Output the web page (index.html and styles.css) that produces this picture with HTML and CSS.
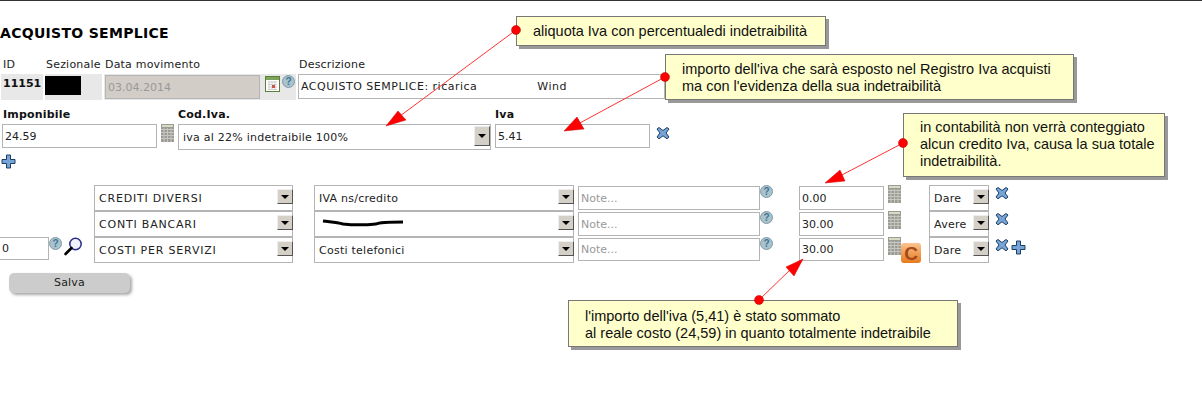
FILE: index.html
```html
<!DOCTYPE html>
<html lang="it">
<head>
    <meta charset="UTF-8">
    <meta name="viewport" content="width=device-width, initial-scale=1.0">
    <title>Acquisto semplice</title>
    <link rel="stylesheet" href="styles.css">
</head>
<body>
    <!-- Icone riutilizzate -->
    <svg class="sprite" aria-hidden="true">
        <symbol id="i-help" viewBox="0 0 13 13">
            <circle cx="6.5" cy="6.5" r="6" fill="#a9c3cd" stroke="#7f9aa6"/>
            <text x="6.5" y="10.2" text-anchor="middle" font-family="Liberation Sans, sans-serif" font-size="10" font-weight="bold" fill="#3f7396">?</text>
        </symbol>
        <symbol id="i-x" viewBox="0 0 14 14">
            <path d="M3 1.5 L7 4.5 L11 1.5 L13 3 L10 7 L13 11 L11 12.8 L7 9.8 L3 12.8 L1 11 L4 7 L1 3 Z" fill="#76a4d6" stroke="#1f3d63" stroke-linejoin="round"/>
        </symbol>
        <symbol id="i-plus" viewBox="0 0 15 15">
            <path d="M5.5 1 H9.5 V5.5 H14 V9.5 H9.5 V14 H5.5 V9.5 H1 V5.5 H5.5 Z" fill="#76a4d6" stroke="#1f3d63" stroke-linejoin="round"/>
        </symbol>
        <symbol id="i-calc" viewBox="0 0 13 18">
            <rect width="13" height="18" fill="#9c9c95"/>
            <rect x="1" y="1" width="11" height="2" fill="#d3dcc4"/>
            <path d="M0 5.5 H13 M0 8.5 H13 M0 11.5 H13 M0 14.5 H13 M3 4 V18 M6.5 4 V18 M10 4 V18" stroke="#c6c6c0" stroke-width="1"/>
        </symbol>
    </svg>

    <h1 class="title">ACQUISTO SEMPLICE</h1>

    <div class="meta">
        <span class="meta-label">ID</span>
        <span class="meta-label meta-label-tight">Sezionale</span>
        <span class="meta-label meta-label-tight">Data movimento</span>
        <span class="meta-label meta-label-tight">Descrizione</span>

        <div class="meta-cell meta-id">11151</div>
        <div class="meta-cell"><span class="redacted"></span></div>
        <div class="meta-cell meta-date">
            <input class="field field-disabled" value="03.04.2014" disabled>
            <svg class="icon-calendar" viewBox="0 0 15 16">
                <rect x="0.5" y="0.5" width="14" height="15" fill="#fff" stroke="#5d7d3c"/>
                <rect x="1" y="1" width="13" height="3" fill="#7ea35a"/>
                <path d="M3 6 H12 M3 8.5 H12 M3 11 H12 M3 13.5 H12 M4 5 V14 M7 5 V14 M10 5 V14" stroke="#cfcfcf"/>
                <rect x="7" y="9" width="3" height="3" fill="#c9534a"/>
            </svg>
            <svg class="icon-help"><use href="#i-help"/></svg>
        </div>
        <input class="field meta-desc" value="ACQUISTO SEMPLICE: ricarica               Wind">
    </div>

    <div class="tax">
        <div class="tax-col tax-col-base">
            <label class="tax-label">Imponibile</label>
            <div class="tax-control">
                <input class="field field-amount" value="24.59">
                <svg class="icon-calc"><use href="#i-calc"/></svg>
            </div>
        </div>
        <div class="tax-col tax-col-code">
            <label class="tax-label">Cod.Iva.</label>
            <div class="select select-tall">
                <select><option>iva al 22% indetraibile 100%</option></select>
                <span class="arrow"></span>
            </div>
        </div>
        <div class="tax-col">
            <label class="tax-label">Iva</label>
            <div class="tax-control">
                <input class="field field-amount" value="5.41">
                <svg class="icon-x icon-x-tax"><use href="#i-x"/></svg>
            </div>
        </div>
    </div>
    <svg class="icon-plus icon-plus-tax"><use href="#i-plus"/></svg>

    <div class="ledger">
        <!-- Riga 1 -->
        <div></div>
        <div class="select select-caps"><select><option>CREDITI DIVERSI</option></select><span class="arrow"></span></div>
        <div class="select select-sub"><select><option>IVA ns/credito</option></select><span class="arrow"></span></div>
        <div class="cell">
            <input class="field field-note" placeholder="Note...">
            <svg class="icon-help"><use href="#i-help"/></svg>
        </div>
        <div class="cell">
            <input class="field field-value" value="0.00">
            <svg class="icon-calc icon-calc-row"><use href="#i-calc"/></svg>
        </div>
        <div class="cell-side">
            <div class="select select-side"><select><option>Dare</option></select><span class="arrow"></span></div>
            <svg class="icon-x"><use href="#i-x"/></svg>
        </div>

        <!-- Riga 2 -->
        <div></div>
        <div class="select select-caps"><select><option>CONTI BANCARI</option></select><span class="arrow"></span></div>
        <div class="select select-sub">
            <select><option></option></select><span class="arrow"></span>
            <svg class="scribble" viewBox="0 0 84 8"><path d="M1 2 C8 3 14 3 21 5 C30 6 44 6 54 5 C58 3 70 3 81 3" fill="none" stroke="#000" stroke-width="3"/></svg>
        </div>
        <div class="cell">
            <input class="field field-note" placeholder="Note...">
            <svg class="icon-help"><use href="#i-help"/></svg>
        </div>
        <div class="cell">
            <input class="field field-value" value="30.00">
            <svg class="icon-calc icon-calc-row"><use href="#i-calc"/></svg>
        </div>
        <div class="cell-side">
            <div class="select select-side"><select><option>Avere</option></select><span class="arrow"></span></div>
            <svg class="icon-x"><use href="#i-x"/></svg>
        </div>

        <!-- Riga 3 -->
        <div class="cell-search">
            <input class="field field-zero" value="0">
            <svg class="icon-help icon-help-search"><use href="#i-help"/></svg>
            <svg class="icon-search" viewBox="0 0 20 19">
                <circle cx="12.5" cy="7" r="5.7" fill="#f2f2fc" stroke="#2a2a8a" stroke-width="1.5"/>
                <path d="M8.5 11 L2.5 17" stroke="#000" stroke-width="2.6" stroke-linecap="round"/>
            </svg>
        </div>
        <div class="select select-caps"><select><option>COSTI PER SERVIZI</option></select><span class="arrow"></span></div>
        <div class="select select-sub"><select><option>Costi telefonici</option></select><span class="arrow"></span></div>
        <div class="cell">
            <input class="field field-note field-short" placeholder="Note...">
            <svg class="icon-help"><use href="#i-help"/></svg>
        </div>
        <div class="cell">
            <input class="field field-value field-short" value="30.00">
            <svg class="icon-calc icon-calc-row"><use href="#i-calc"/></svg>
            <svg class="icon-c" viewBox="0 0 20 20">
                <defs>
                    <linearGradient id="c-bg" x1="0" y1="0" x2="0" y2="1">
                        <stop offset="0" stop-color="#fbc48e"/>
                        <stop offset="1" stop-color="#e67a1e"/>
                    </linearGradient>
                </defs>
                <rect width="20" height="20" rx="3" fill="url(#c-bg)"/>
                <text x="10" y="16.5" text-anchor="middle" font-family="Liberation Sans, sans-serif" font-size="19" font-weight="bold" fill="#a3491a">C</text>
            </svg>
        </div>
        <div class="cell-side">
            <div class="select select-side"><select><option>Dare</option></select><span class="arrow"></span></div>
            <svg class="icon-x"><use href="#i-x"/></svg>
            <svg class="icon-plus icon-plus-row"><use href="#i-plus"/></svg>
        </div>
    </div>

    <button class="save">Salva</button>

    <!-- Note sovrapposte allo screenshot -->
    <svg class="arrows" viewBox="0 0 1202 400">
        <g class="arrow-line">
            <path d="M516 30 L400 116"/>
            <path d="M665 77 L578 124"/>
            <path d="M903 143 L838 177"/>
            <path d="M759 300 L792 268"/>
        </g>
        <g class="arrow-head">
            <path d="M386 126 L398 111 L406 120 Z"/>
            <path d="M564 131 L577 117 L584 129 Z"/>
            <path d="M825 183 L840 170 L845 181 Z"/>
            <path d="M803 259 L786 267 L794 276 Z"/>
        </g>
        <g class="arrow-dot">
            <circle cx="516" cy="30" r="4.5"/>
            <circle cx="665" cy="77" r="4.5"/>
            <circle cx="903" cy="143" r="4.5"/>
            <circle cx="759" cy="300" r="4.5"/>
        </g>
    </svg>

    <div class="note note-rate">aliquota Iva con percentualedi indetraibilità</div>
    <div class="note note-register">importo dell'iva che sarà esposto nel Registro Iva acquisti<br>ma con l'evidenza della sua indetraibilità</div>
    <div class="note note-credit">in contabilità non verrà conteggiato<br>alcun credito Iva, causa la sua totale<br>indetraibilità.</div>
    <div class="note note-cost">l'importo dell'iva (5,41) è stato sommato<br>al reale costo (24,59) in quanto totalmente indetraibile</div>
</body>
</html>
```

FILE: styles.css
```css
body {
    margin: 0;
    padding: 0;
    height: 399px;
    overflow: hidden;
    position: relative;
    border-top: 1px solid #333;
    background-color: #fff;
    color: #222;
    font-family: "DejaVu Sans", Verdana, sans-serif;
    font-size: 11px;
}
.sprite {
    display: none;
}
svg {
    display: block;
    flex: none;
}
.title {
    margin: 24px 0 0;
    font-size: 14px;
    line-height: 17px;
    font-weight: bold;
    letter-spacing: 0.3px;
    color: #000;
}

/* Intestazione */
.meta {
    display: grid;
    grid-template-columns: 42px 57px 192px 367px;
    grid-template-rows: 16px 26px;
    column-gap: 2px;
    margin-top: 16px;
    padding-left: 1px;
    width: 664px;
}
.meta-label {
    padding-left: 2px;
    line-height: 14px;
    letter-spacing: 0.2px;
}
.meta-label-tight {
    padding-left: 1px;
}
.meta-cell {
    background-color: #e8e8e8;
}
.meta-id {
    padding: 2px 0 0 2px;
    font-weight: bold;
    font-size: 11px;
    line-height: 15px;
    color: #111;
}
.redacted {
    display: block;
    width: 36px;
    height: 19px;
    margin-top: 2px;
    background-color: #000;
}
.meta-date {
    display: flex;
    padding-top: 1px;
    padding-left: 1px;
}
.meta-date .field {
    width: 155px;
    height: 24px;
}
.icon-calendar {
    width: 15px;
    height: 16px;
    margin: 1px 0 0 5px;
}
.icon-help {
    width: 13px;
    height: 13px;
    margin-left: 2px;
}
.meta-desc {
    width: 367px;
    height: 25px;
    margin-top: 0;
    letter-spacing: 0.5px;
}

/* Campi */
.field {
    box-sizing: border-box;
    display: block;
    flex: none;
    margin: 0;
    padding: 0 2px;
    border: 1px solid #b4b4b4;
    border-radius: 0;
    outline: none;
    background-color: #fff;
    color: #222;
    font-family: inherit;
    font-size: 11px;
}
.field::placeholder {
    color: #999;
    opacity: 1;
}
.field-disabled {
    background-color: #d2cdc6;
    color: #999;
}
.field-amount {
    width: 155px;
    height: 24px;
}
.field-note {
    width: 182px;
    height: 24px;
    margin-top: 1px;
}
.field-value {
    width: 85px;
    height: 24px;
    margin-top: 1px;
}
.field-short {
    height: 23px;
}
.field-zero {
    width: 50px;
    height: 23px;
    margin-left: -1px;
}

/* Select con freccia vecchio stile */
.select {
    position: relative;
    height: 26px;
    width: 199px;
}
.select select {
    appearance: none;
    box-sizing: border-box;
    display: block;
    width: 100%;
    height: 100%;
    margin: 0;
    padding: 0 0 0 4px;
    border: 1px solid #b4b4b4;
    border-radius: 0;
    outline: none;
    background-color: #fff;
    color: #222;
    font-family: inherit;
    font-size: 11px;
}
.arrow {
    position: absolute;
    top: 4px;
    right: 0;
    box-sizing: border-box;
    width: 16px;
    height: 15px;
    border: 1px solid;
    border-color: #eee #555 #555 #eee;
    background-color: #d4d0c8;
}
.arrow::after {
    content: "";
    position: absolute;
    top: 5px;
    left: 3px;
    border-style: solid;
    border-width: 4px 4px 0;
    border-color: #000 transparent transparent;
}
.select-caps select {
    letter-spacing: 0.8px;
}
.select-sub {
    width: 260px;
}
.select-sub select {
    letter-spacing: 0.25px;
}
.select-side {
    width: 60px;
    flex: none;
}
.select-side select {
    letter-spacing: 0.25px;
}
.select-tall {
    width: 313px;
}
.select-tall select {
    letter-spacing: 0.25px;
}
.select-tall .arrow {
    top: 2px;
    right: 1px;
    height: 20px;
}
.select-tall .arrow::after {
    top: 7px;
}
.scribble {
    position: absolute;
    top: 8px;
    left: 8px;
    width: 84px;
    height: 8px;
}

/* Imponibile / Cod.Iva / Iva */
.tax {
    display: flex;
    margin-top: 6px;
    padding-left: 2px;
}
.tax-col-base {
    width: 176px;
}
.tax-col-code {
    width: 317px;
}
.tax-label {
    display: block;
    height: 18px;
    padding-left: 1px;
    font-weight: bold;
    line-height: 18px;
    letter-spacing: 0.2px;
    color: #111;
}
.tax-col-code .tax-label,
.tax-col:last-child .tax-label {
    padding-left: 0;
}
.tax-control {
    display: flex;
    align-items: flex-start;
}
.icon-calc {
    width: 13px;
    height: 18px;
    margin-left: 4px;
}
.icon-x {
    width: 14px;
    height: 14px;
    margin: 1px 0 0 6px;
}
.icon-x-tax {
    margin-top: 2px;
}
.icon-plus {
    width: 15px;
    height: 15px;
}
.icon-plus-tax {
    margin: 4px 0 0 1px;
}
.icon-plus-row {
    margin: 3px 0 0 2px;
}

/* Righe contabili */
.ledger {
    display: grid;
    grid-template-columns: 94px 220px 264px 221px 130px 1fr;
    grid-auto-rows: 26px;
    margin-top: 16px;
}
.cell,
.cell-side,
.cell-search {
    display: flex;
    align-items: flex-start;
}
.icon-help-search {
    margin: 0;
}
.icon-search {
    width: 20px;
    height: 19px;
    margin-left: 1px;
}
.cell .icon-help {
    margin: 0;
}
.icon-calc-row {
    margin-top: 0;
}
.icon-c {
    width: 20px;
    height: 20px;
    margin: 6px 0 0 0;
}

.save {
    display: block;
    width: 121px;
    height: 20px;
    margin: 10px 0 0 9px;
    padding: 0 0 2px;
    border: none;
    border-radius: 5px;
    background-color: #ccc;
    box-shadow: 2px 2px 3px #aaa;
    color: #222;
    font-family: inherit;
    font-size: 11px;
    letter-spacing: 0.2px;
}

/* Note gialle */
.arrows {
    position: absolute;
    top: -1px;
    left: 0;
    width: 1202px;
    height: 400px;
    z-index: 2;
    pointer-events: none;
}
.arrow-line path {
    fill: none;
    stroke: #f33;
    stroke-width: 1;
}
.arrow-head path {
    fill: #f00;
    stroke: #c00;
    stroke-width: 0.5;
}
.arrow-dot circle {
    fill: #f00;
    stroke: #a00;
    stroke-width: 0.5;
}
.note {
    position: absolute;
    box-sizing: border-box;
    border: 1px solid #777;
    background-color: #ffc;
    box-shadow: 3px 3px 0 #999;
    color: #111;
    font-family: "Liberation Sans", Arial, sans-serif;
    font-size: 14.5px;
    line-height: 17px;
    padding-left: 16px;
    z-index: 1;
}
.note-rate {
    top: 15px;
    left: 516px;
    width: 310px;
    height: 30px;
    padding-top: 6px;
}
.note-register {
    top: 53px;
    left: 665px;
    width: 409px;
    height: 46px;
    padding-top: 6px;
}
.note-credit {
    top: 112px;
    left: 903px;
    width: 262px;
    height: 64px;
    padding-top: 5px;
}
.note-cost {
    top: 299px;
    left: 568px;
    width: 390px;
    height: 47px;
    padding-top: 7px;
}
```
